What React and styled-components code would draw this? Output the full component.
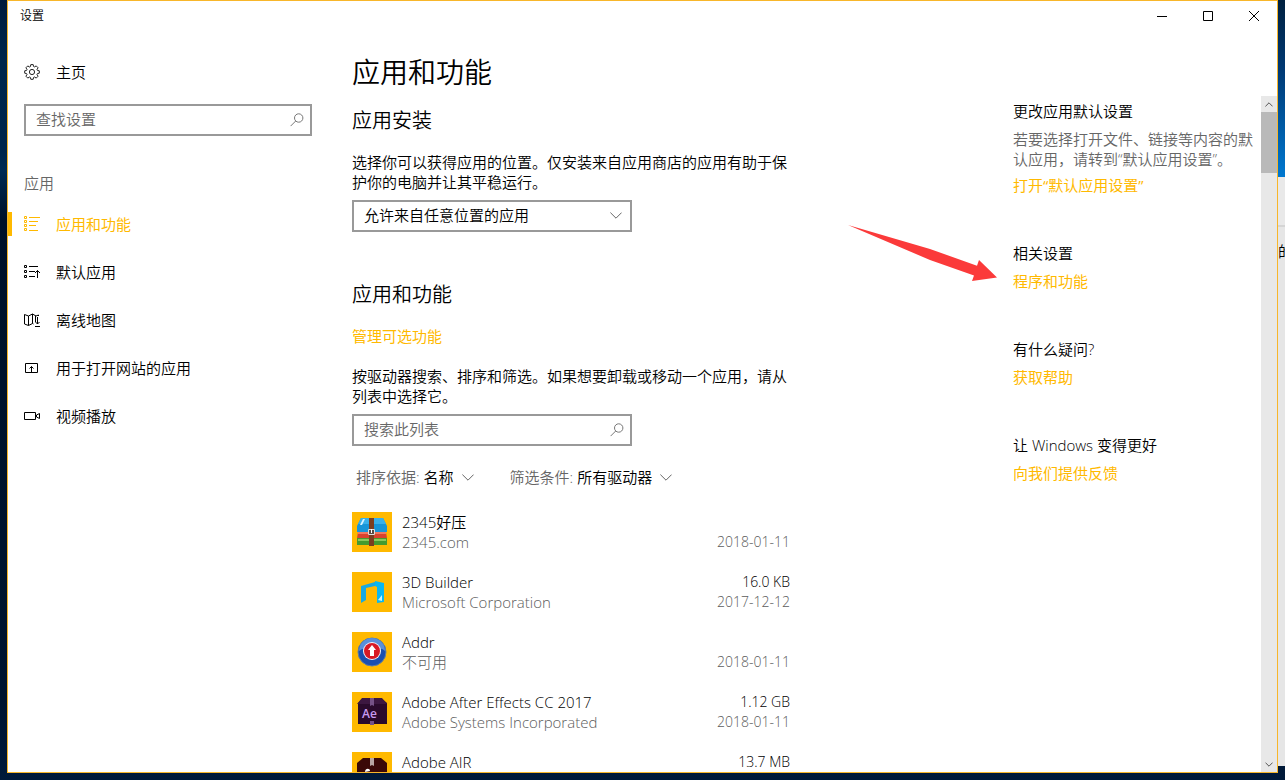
import React from 'react';
import styled, { createGlobalStyle, css } from 'styled-components';

const accent = '#ffb900';

const GlobalStyle = createGlobalStyle`
  * {
    box-sizing: border-box;
  }

  body {
    margin: 0;
    background: #001a38;
    color: #000;
    font-family: "Open Sans", "Noto Sans CJK SC", sans-serif;
    font-size: 15px;
    font-weight: 350;
    line-height: 20px;
  }

  h1, h2, h3, p, ul {
    margin: 0;
    padding: 0;
    font-size: inherit;
    font-weight: inherit;
  }

  ul {
    list-style: none;
  }

  button, input, select {
    margin: 0;
    font: inherit;
    color: inherit;
  }
`;

const Desktop = styled.div`
  height: 100vh;
  display: flex;
  overflow: hidden;
  background: linear-gradient(#001b3c, #00264b 60px, #00254a 150px, #002a52 170px, #001128 220px, #00142e 700px, #001a3a);
`;

const Wallpaper = styled.div`
  flex: 0 0 177px;
  background: linear-gradient(#00203f, #003a75 40%, #0078d0);
`;

const BackEdge = styled.div`
  flex: 0 0 7px;
  display: flex;
  flex-direction: column;
  overflow: hidden;
`;

const BackWindow = styled.div`
  flex: 1;
  margin-bottom: 14px;
  padding-top: 64px;
  display: flex;
  background: linear-gradient(#e9e9e9 48px, #d5d5d5 48px, #d5d5d5 50px, #e6e6e6 50px);
`;

const Window = styled.div`
  flex: 1;
  min-width: 0;
  margin: 0 0 7px 7px;
  display: flex;
  flex-direction: column;
  border: 1px solid #f8b62a;
  background: #fff;
`;

const TitleBar = styled.header`
  flex: 0 0 31px;
  display: flex;
  align-items: flex-start;
  padding-left: 12px;
  font-size: 12px;
  line-height: 30px;
`;

const WindowTitle = styled.span`
  flex: 1;
`;

const WindowButton = styled.button`
  width: 46px;
  height: 30px;
  padding: 0;
  border: 0;
  background: none;
  display: flex;
  align-items: center;
  justify-content: center;
`;

const Body = styled.div`
  flex: 1;
  min-height: 0;
  display: flex;
`;

const Sidebar = styled.nav`
  flex: 0 0 344px;
  padding-right: 40px;
`;

const NavLink = styled.a`
  height: 48px;
  display: flex;
  align-items: center;
  gap: 16px;
  padding-left: 16px;
  color: #000;
  text-decoration: none;

  ${props => props.$home && css`
    height: 80px;
    margin-bottom: -8px;
  `}

  ${props => props.$active && css`
    padding-left: 12px;
    color: ${accent};
    font-weight: 400;

    &::before {
      content: '';
      width: 4px;
      height: 24px;
      margin-right: -4px;
      margin-left: -12px;
      background: ${accent};
    }
  `}
`;

const NavHeading = styled.h3`
  margin: 37px 0 7px 16px;
  color: #666;
`;

const SearchBox = styled.label`
  position: relative;
  display: block;
  margin-left: ${props => props.$indent || 0}px;
  max-width: ${props => props.$width}px;

  svg {
    position: absolute;
    top: 9px;
    right: 8px;
  }
`;

const fieldStyle = css`
  width: 100%;
  height: 32px;
  padding: 0 32px 2px 10px;
  border: 2px solid #999;
  border-radius: 0;
  background: #fff;
  outline: 0;
`;

const Field = styled.input`
  ${fieldStyle}
  display: block;

  &::placeholder {
    color: #666;
    opacity: 1;
  }
`;

const SelectBox = styled.div`
  position: relative;
  max-width: 280px;

  svg {
    position: absolute;
    top: 12px;
    right: 10px;
    pointer-events: none;
  }
`;

const Select = styled.select`
  ${fieldStyle}
  appearance: none;
`;

const Page = styled.main`
  flex: 1;
  min-width: 0;
  display: flex;
  flex-direction: column;
`;

const PageTitle = styled.h1`
  flex: 0 0 64px;
  padding-top: 20px;
  font-size: 28px;
  line-height: 40px;
`;

const Scroller = styled.div`
  flex: 1;
  min-height: 0;
  display: flex;
`;

const ScrollArea = styled.div`
  flex: 1;
  min-width: 0;
  display: flex;
  justify-content: space-between;
  overflow-y: auto;
  scrollbar-width: none;
`;

const Content = styled.div`
  flex: 0 1 438px;
  padding-top: 11px;
`;

const SectionTitle = styled.h2`
  margin: ${props => (props.$spaced ? 49 : 0)}px 0 17px;
  font-size: 20px;
  line-height: 28px;
`;

const Text = styled.p`
  margin-bottom: 8px;
`;

const Link = styled.a`
  color: ${accent};
  font-weight: 400;
  text-decoration: none;
`;

const LinkRow = styled.p`
  margin-bottom: 20px;
`;

const Filters = styled.div`
  display: flex;
  gap: 36px;
  padding: 21px 0 25px 4px;
`;

const Filter = styled.label`
  display: flex;
  align-items: center;
  gap: 4px;
  color: #666;

  svg {
    margin-left: 4px;
  }
`;

const FilterSelect = styled.select`
  appearance: none;
  field-sizing: content;
  padding: 0;
  border: 0;
  background: none;
  color: #000;
`;

const AppRow = styled.li`
  display: flex;
  height: 40px;
  margin-bottom: 20px;
`;

const AppIcon = styled.svg`
  flex: 0 0 40px;
  height: 40px;
  margin-right: 10px;
  background: ${accent};
`;

const AppText = styled.div`
  flex: ${props => (props.$end ? '0 0 auto' : '1')};
  display: grid;
  grid-template-rows: 20px 20px;
  text-align: ${props => (props.$end ? 'right' : 'left')};
  font-size: ${props => (props.$end ? 14 : 15)}px;
`;

const Muted = styled.span`
  color: #5c5c5c;
  font-weight: 300;
`;

const Related = styled.aside`
  flex: 0 0 248px;
  padding-top: 5px;
`;

const RelatedSection = styled.section`
  position: relative;
  margin-bottom: 48px;
`;

const RelatedTitle = styled.h3`
  margin-bottom: 8px;
`;

const RelatedText = styled.p`
  margin-bottom: 6px;
  color: #666;
`;

const Arrow = styled.svg`
  position: absolute;
  top: -18px;
  left: -165px;
`;

const Scrollbar = styled.div`
  flex: 0 0 16px;
  display: flex;
  flex-direction: column;
  background: #e8e8e8;
`;

const ScrollButton = styled.button`
  flex: 0 0 16px;
  padding: 0;
  border: 0;
  background: none;
  display: flex;
  align-items: center;
  justify-content: center;
`;

const Thumb = styled.div`
  height: 61px;
  margin-bottom: auto;
  background: #b9b9b9;
`;

const Chevron = () => (
  <svg width="12" height="7" viewBox="0 0 12 7" fill="none" stroke="#666">
    <path d="M.4.6 6 6.200 11.600.6" />
  </svg>
);

const ScrollChevron = ({ up }) => (
  <svg width="8" height="5" viewBox="0 0 8 5" fill="none" stroke="#555">
    <path d={up ? 'M.4 4.400 4 .8l3.600 3.600' : 'M.4.6 4 4.200 7.600.6'} />
  </svg>
);

const SearchIcon = () => (
  <svg width="14" height="14" viewBox="0 0 14 14" fill="none" stroke="#777">
    <circle cx="8.7" cy="5" r="4.2" />
    <path d="M5.7 8 .6 13.1" />
  </svg>
);

const GearIcon = () => (
  <svg width="16" height="16" viewBox="0 0 16 16" fill="none" stroke="#222">
    <circle cx="8" cy="8" r="2.6" />
    <path d="M6.8.6h2.4l.4 1.9 1 .4 1.600-1 1.900 1.900-1.100 1.600.4 1 1.900.4v2.400l-1.900.4-.4 1 1.100 1.600-1.900 1.900-1.600-1.100-1 .4-.4 1.900H6.800l-.4-1.900-1-.4-1.600 1.100-1.900-1.900L3 10.600l-.4-1L.7 9.200V6.800l1.900-.4.4-1-1.100-1.600 1.900-1.900 1.600 1.100 1-.4z" />
  </svg>
);

const navIcons = {
  apps: <path d="M.5.5h2v2h-2zM.5 4.500h2v2h-2zM.5 8.500h2v2h-2zM.5 12.500h2v2h-2zM5 1.500h11M5 5.500h9M5 9.500h7M5 14.500h9" />,
  defaults: <path d="M.5 1.500h2v2h-2zM.5 6.500h2v2h-2zM.5 11.500h2v2h-2zM5 2.500h9M5 7.500h6M5 12.500h6M13.500 14V6.500M11 9l2.500-2.500L16 9" />,
  maps: <path d="M9.500 12 8.500 11.500 4.500 13.500.5 12V2.500l4 1.500 4-2 3.500 2 2.500-1v1M4.500 4v9.500M8.500 2v9.500M11.500 4v6M13.500 5v7M11.500 10l2 2 2-2M11 14.500h5" />,
  web: <path d="M1.500 12.500v-9h12v9zM7.500 12V6.500M5.500 8.500l2-2 2 2" />,
  video: <path d="M.5 4.500h11v7H.5zM12.500 7l3-1.500v5l-3-1.500z" />,
};

const NavIcon = ({ name }) => (
  <svg width="16" height="16" viewBox="0 0 16 16" fill="none" stroke="currentColor">
    {navIcons[name]}
  </svg>
);

const appIcons = {
  zip: (
    <>
      <path d="M9 6h22l4 8v6H5v-6z" fill="#1795d8" />
      <path d="M9 6h22l3 6H6z" fill="#38b0ea" />
      <path d="M11 7h2l-3 6H8z" fill="#d7f2ff" />
      <path d="M6 20h28l1 6H5z" fill="#d8432e" />
      <path d="M6 20h28v2H6z" fill="#ef7961" />
      <path d="M5 26h30v7H5z" fill="#459b2f" />
      <path d="M6 27h28v2H6z" fill="#8ac85c" />
      <path d="M17 6h5v28h-5z" fill="#7c3e20" />
      <path d="M16.500 17.500h6v5h-6z" fill="#5a4a43" stroke="#ddd" />
      <path d="M19.500 17v4" stroke="#fff" />
    </>
  ),
  builder: (
    <>
      <path d="m9 14 14-4v4l-9 2v12l-5 3z" fill="#18a9e0" />
      <path d="m23 9 9 2v19l-7 1V15l-2-1z" fill="#08b7f1" />
      <path d="m26 28 4-5v6z" fill="#c6f2ff" />
    </>
  ),
  addr: (
    <>
      <circle cx="20" cy="20" r="14" fill="#1a4fb0" stroke="#5a7da8" />
      <path d="M7 19a13 13 0 0 1 26 0c-5-5-20-5-26 0z" fill="#5a90da" />
      <circle cx="20" cy="19" r="9" fill="#f3f4fa" />
      <circle cx="20" cy="19" r="8" fill="#d71925" />
      <path d="m20 13 4 5h-2v6h-4v-6h-2z" fill="#fff" />
    </>
  ),
  ae: (
    <>
      <path d="M11 6h18l6 5v21H6V11z" fill="#2a0a2c" />
      <path d="M5 12h30l-5-6H10z" fill="#3c1740" />
      <path d="M18 6h4v8l-2-1-2 1zM18 29h4v4h-4z" fill="#765287" />
      <text x="10" y="26" fill="#c99af0" fontSize="12" fontWeight="600">Ae</text>
    </>
  ),
  air: (
    <>
      <path d="M11 6h18l6 5v22H5V11z" fill="#3a0907" />
      <path d="M18 6h4v8l-2-1-2 1z" fill="#b9a6a3" />
      <path d="M13 20c0-4 5-4 5-1" fill="#fff" />
    </>
  ),
};

const navItems = [
  { icon: 'apps', label: '应用和功能', active: true },
  { icon: 'defaults', label: '默认应用' },
  { icon: 'maps', label: '离线地图' },
  { icon: 'web', label: '用于打开网站的应用' },
  { icon: 'video', label: '视频播放' },
];

const apps = [
  { icon: 'zip', name: '2345好压', publisher: '2345.com', date: '2018-01-11' },
  { icon: 'builder', name: '3D Builder', publisher: 'Microsoft Corporation', size: '16.0 KB', date: '2017-12-12' },
  { icon: 'addr', name: 'Addr', publisher: '不可用', date: '2018-01-11' },
  { icon: 'ae', name: 'Adobe After Effects CC 2017', publisher: 'Adobe Systems Incorporated', size: '1.12 GB', date: '2018-01-11' },
  { icon: 'air', name: 'Adobe AIR', size: '13.7 MB' },
];

const related = [
  { title: '更改应用默认设置', text: '若要选择打开文件、链接等内容的默认应用，请转到“默认应用设置”。', link: '打开“默认应用设置”' },
  { title: '相关设置', link: '程序和功能', arrow: true },
  { title: '有什么疑问?', link: '获取帮助' },
  { title: '让 Windows 变得更好', link: '向我们提供反馈' },
];

function App() {
  return (
    <Desktop lang="zh-CN">
      <GlobalStyle />
      <Window>
        <TitleBar>
          <WindowTitle>设置</WindowTitle>
          <WindowButton aria-label="最小化">
            <svg width="10" height="10" stroke="#000"><path d="M0 5.500h10" /></svg>
          </WindowButton>
          <WindowButton aria-label="最大化">
            <svg width="10" height="10" fill="none" stroke="#000"><path d="M.5.5h9v9h-9z" /></svg>
          </WindowButton>
          <WindowButton aria-label="关闭">
            <svg width="10" height="10" stroke="#000"><path d="m0 0 10 10M10 0 0 10" /></svg>
          </WindowButton>
        </TitleBar>
        <Body>
          <Sidebar>
            <NavLink href="#home" $home>
              <GearIcon />
              主页
            </NavLink>
            <SearchBox $indent={16} $width={288}>
              <Field type="text" placeholder="查找设置" aria-label="查找设置" />
              <SearchIcon />
            </SearchBox>
            <NavHeading>应用</NavHeading>
            {navItems.map(item => (
              <NavLink key={item.icon} href={`#${item.icon}`} $active={item.active}>
                <NavIcon name={item.icon} />
                {item.label}
              </NavLink>
            ))}
          </Sidebar>
          <Page>
            <PageTitle>应用和功能</PageTitle>
            <Scroller>
              <ScrollArea>
                <Content>
                  <SectionTitle>应用安装</SectionTitle>
                  <Text>选择你可以获得应用的位置。仅安装来自应用商店的应用有助于保护你的电脑并让其平稳运行。</Text>
                  <SelectBox>
                    <Select aria-label="应用安装">
                      <option>允许来自任意位置的应用</option>
                    </Select>
                    <Chevron />
                  </SelectBox>
                  <SectionTitle $spaced>应用和功能</SectionTitle>
                  <LinkRow><Link href="#optional">管理可选功能</Link></LinkRow>
                  <Text>按驱动器搜索、排序和筛选。如果想要卸载或移动一个应用，请从列表中选择它。</Text>
                  <SearchBox $width={280}>
                    <Field type="text" placeholder="搜索此列表" aria-label="搜索此列表" />
                    <SearchIcon />
                  </SearchBox>
                  <Filters>
                    <Filter>
                      排序依据:
                      <FilterSelect><option>名称</option></FilterSelect>
                      <Chevron />
                    </Filter>
                    <Filter>
                      筛选条件:
                      <FilterSelect><option>所有驱动器</option></FilterSelect>
                      <Chevron />
                    </Filter>
                  </Filters>
                  <ul>
                    {apps.map(app => (
                      <AppRow key={app.name}>
                        <AppIcon viewBox="0 0 40 40" aria-hidden="true">{appIcons[app.icon]}</AppIcon>
                        <AppText>
                          <span>{app.name}</span>
                          <Muted>{app.publisher}</Muted>
                        </AppText>
                        <AppText $end>
                          <span>{app.size}</span>
                          <Muted>{app.date}</Muted>
                        </AppText>
                      </AppRow>
                    ))}
                  </ul>
                </Content>
                <Related>
                  {related.map(item => (
                    <RelatedSection key={item.title}>
                      <RelatedTitle>{item.title}</RelatedTitle>
                      {item.text && <RelatedText>{item.text}</RelatedText>}
                      <Link href="#related">{item.link}</Link>
                      {item.arrow && (
                        <Arrow width="150" height="57" aria-hidden="true">
                          <path d="M0 0 82 24 129 40.700 131 35 149 52.500 124 56 126 50.500 82 35z" fill="#fb3a3a" />
                        </Arrow>
                      )}
                    </RelatedSection>
                  ))}
                </Related>
              </ScrollArea>
              <Scrollbar>
                <ScrollButton aria-label="向上滚动"><ScrollChevron up /></ScrollButton>
                <Thumb />
                <ScrollButton aria-label="向下滚动"><ScrollChevron /></ScrollButton>
              </Scrollbar>
            </Scroller>
          </Page>
        </Body>
      </Window>
      <BackEdge>
        <Wallpaper />
        <BackWindow>的</BackWindow>
      </BackEdge>
    </Desktop>
  );
}

export default App;
